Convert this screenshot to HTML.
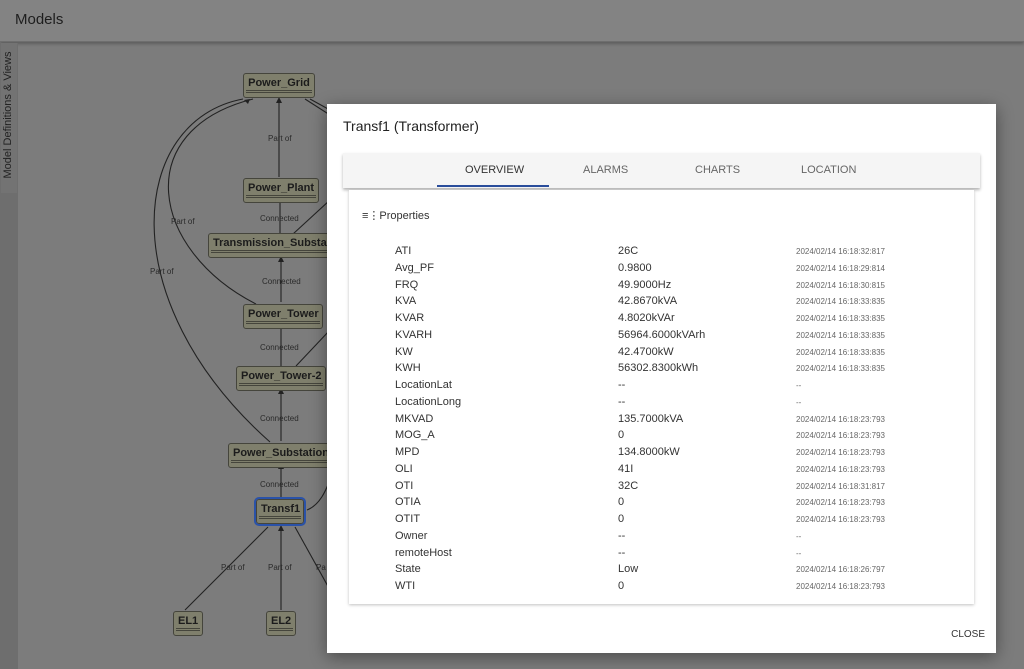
<!DOCTYPE html>
<html><head><meta charset="utf-8"><style>
*{margin:0;padding:0;box-sizing:border-box}
body{width:1024px;height:669px;overflow:hidden;background:#7c7c7c;font-family:"Liberation Sans",sans-serif;position:relative}
.hdr{position:absolute;left:0;top:0;width:1024px;height:42px;background:#838383;border-bottom:1px solid #6e6e6e;box-shadow:0 2px 3px rgba(0,0,0,.25)}
.hdr span{position:absolute;left:15px;top:11px;font-size:15px;color:#1e1e1e}
.side{position:absolute;left:0;top:43px;width:18px;height:626px;background:#6e6e6e}
.side .tab{position:absolute;left:1px;top:0;width:16px;height:150px;background:#737373}
.side span{position:absolute;left:-62px;top:66px;width:140px;transform:rotate(-90deg);font-size:11px;color:#222;white-space:nowrap;text-align:center}
.node{position:absolute;background:#7f7f6c;border:1px solid #45453c;border-radius:3px;font-weight:bold;font-size:11px;color:#1c1c1c;padding:3px 4px 0;height:25px;white-space:nowrap;overflow:hidden;text-align:center}
.node:after{content:"";position:absolute;left:2px;right:2px;bottom:4px;border-top:1px solid #45453c;border-bottom:1px solid #45453c;height:1px}
.lbl{position:absolute;font-size:8px;color:#2a2a2a}
.dlg{position:absolute;left:327px;top:104px;width:669px;height:549px;background:#fff;box-shadow:0 4px 16px rgba(0,0,0,.4)}
.title{position:absolute;left:16px;top:14px;font-size:14px;color:#222}
.tabs{position:absolute;left:16px;top:49px;width:637px;height:35px;background:#f5f5f5;box-shadow:0 2px 3px rgba(0,0,0,.3)}
.tabs span{position:absolute;top:11px;font-size:11px;color:#666}
.ul{position:absolute;left:94px;top:32px;width:112px;height:2px;background:#2a4d9b}
.card{position:absolute;left:22px;top:86px;width:625px;height:414px;background:#fff;box-shadow:0 1px 3px rgba(0,0,0,.25)}
.ph{position:absolute;left:13px;top:19px;font-size:11px;color:#333}
.row{position:absolute;left:0;width:625px;height:17px;font-size:11px;color:#333;margin-top:2px}
.row .a{position:absolute;left:46px}
.row .b{position:absolute;left:269px}
.row .c{position:absolute;left:447px;font-size:8px;color:#666;top:2px}
.close{position:absolute;right:11px;bottom:13px;font-size:10px;color:#333}
</style></head><body>
<div class="hdr"><span>Models</span></div>
<div class="side"><div class="tab"></div><span>Model Definitions &amp; Views</span></div>
<svg style="position:absolute;left:0;top:0" width="330" height="669">
<g stroke="#222" stroke-width="1.1" fill="none">
<path d="M279 177 V101"/><path d="M280 233 V201"/><path d="M281 302 V260"/><path d="M281 366 V327"/><path d="M281 441 V392"/><path d="M281 497 V467"/>
<path d="M256 304 C150 250 130 130 253 99"/>
<path d="M270 442 C110 300 130 120 243 99"/>
<path d="M185 610 L268 527"/><path d="M281 610 V527"/><path d="M330 590 L295 527"/>
<path d="M293 234 L330 200"/><path d="M296 366 L330 330"/><path d="M307 510 C320 505 326 490 330 480"/>
<path d="M310 99 L330 110"/><path d="M305 99 L330 115"/>
</g>
<g fill="#222"><path d="M276 103 L279 97 L282 103Z"/><path d="M277 203 L280 197 L283 203Z"/><path d="M278 262 L281 256 L284 262Z"/><path d="M278 329 L281 323 L284 329Z"/><path d="M278 394 L281 388 L284 394Z"/><path d="M278 469 L281 463 L284 469Z"/><path d="M278 531 L281 525 L284 531Z"/><path d="M250 99 L244 100 L248 104Z"/></g>
</svg>
<div class="node" style="left:243px;top:73px;width:72px">Power_Grid</div>
<div class="node" style="left:243px;top:178px;width:76px">Power_Plant</div>
<div class="node" style="left:208px;top:233px;width:122px;text-align:left">Transmission_Substa</div>
<div class="node" style="left:243px;top:304px;width:80px">Power_Tower</div>
<div class="node" style="left:236px;top:366px;width:90px">Power_Tower-2</div>
<div class="node" style="left:228px;top:443px;width:102px;text-align:left">Power_Substation</div>
<div class="node" style="left:256px;top:499px;width:48px;outline:2px solid #2a52a8">Transf1</div>
<div class="node" style="left:173px;top:611px;width:30px">EL1</div>
<div class="node" style="left:266px;top:611px;width:30px">EL2</div>
<div class="lbl" style="left:268px;top:134px">Part of</div>
<div class="lbl" style="left:260px;top:214px">Connected</div>
<div class="lbl" style="left:171px;top:217px">Part of</div>
<div class="lbl" style="left:150px;top:267px">Part of</div>
<div class="lbl" style="left:262px;top:277px">Connected</div>
<div class="lbl" style="left:260px;top:343px">Connected</div>
<div class="lbl" style="left:260px;top:414px">Connected</div>
<div class="lbl" style="left:260px;top:480px">Connected</div>
<div class="lbl" style="left:221px;top:563px">Part of</div>
<div class="lbl" style="left:268px;top:563px">Part of</div>
<div class="lbl" style="left:316px;top:563px">Pa</div>
<div class="dlg">
<div class="title">Transf1 (Transformer)</div>
<div class="tabs"><span style="left:122px;color:#333">OVERVIEW</span><span style="left:240px">ALARMS</span><span style="left:352px">CHARTS</span><span style="left:458px">LOCATION</span><div class="ul"></div></div>
<div class="card"><div class="ph">&#8801;&#8942;Properties</div>
<div class="row" style="top:53px"><span class="a">ATI</span><span class="b">26C</span><span class="c">2024/02/14 16:18:32:817</span></div>
<div class="row" style="top:69.75px"><span class="a">Avg_PF</span><span class="b">0.9800</span><span class="c">2024/02/14 16:18:29:814</span></div>
<div class="row" style="top:86.5px"><span class="a">FRQ</span><span class="b">49.9000Hz</span><span class="c">2024/02/14 16:18:30:815</span></div>
<div class="row" style="top:103.25px"><span class="a">KVA</span><span class="b">42.8670kVA</span><span class="c">2024/02/14 16:18:33:835</span></div>
<div class="row" style="top:120px"><span class="a">KVAR</span><span class="b">4.8020kVAr</span><span class="c">2024/02/14 16:18:33:835</span></div>
<div class="row" style="top:136.75px"><span class="a">KVARH</span><span class="b">56964.6000kVArh</span><span class="c">2024/02/14 16:18:33:835</span></div>
<div class="row" style="top:153.5px"><span class="a">KW</span><span class="b">42.4700kW</span><span class="c">2024/02/14 16:18:33:835</span></div>
<div class="row" style="top:170.25px"><span class="a">KWH</span><span class="b">56302.8300kWh</span><span class="c">2024/02/14 16:18:33:835</span></div>
<div class="row" style="top:187px"><span class="a">LocationLat</span><span class="b">--</span><span class="c">--</span></div>
<div class="row" style="top:203.75px"><span class="a">LocationLong</span><span class="b">--</span><span class="c">--</span></div>
<div class="row" style="top:220.5px"><span class="a">MKVAD</span><span class="b">135.7000kVA</span><span class="c">2024/02/14 16:18:23:793</span></div>
<div class="row" style="top:237.25px"><span class="a">MOG_A</span><span class="b">0</span><span class="c">2024/02/14 16:18:23:793</span></div>
<div class="row" style="top:254px"><span class="a">MPD</span><span class="b">134.8000kW</span><span class="c">2024/02/14 16:18:23:793</span></div>
<div class="row" style="top:270.75px"><span class="a">OLI</span><span class="b">41I</span><span class="c">2024/02/14 16:18:23:793</span></div>
<div class="row" style="top:287.5px"><span class="a">OTI</span><span class="b">32C</span><span class="c">2024/02/14 16:18:31:817</span></div>
<div class="row" style="top:304.25px"><span class="a">OTIA</span><span class="b">0</span><span class="c">2024/02/14 16:18:23:793</span></div>
<div class="row" style="top:321px"><span class="a">OTIT</span><span class="b">0</span><span class="c">2024/02/14 16:18:23:793</span></div>
<div class="row" style="top:337.75px"><span class="a">Owner</span><span class="b">--</span><span class="c">--</span></div>
<div class="row" style="top:354.5px"><span class="a">remoteHost</span><span class="b">--</span><span class="c">--</span></div>
<div class="row" style="top:371.25px"><span class="a">State</span><span class="b">Low</span><span class="c">2024/02/14 16:18:26:797</span></div>
<div class="row" style="top:388px"><span class="a">WTI</span><span class="b">0</span><span class="c">2024/02/14 16:18:23:793</span></div>
</div>
<div class="close">CLOSE</div>
</div>
</body></html>
